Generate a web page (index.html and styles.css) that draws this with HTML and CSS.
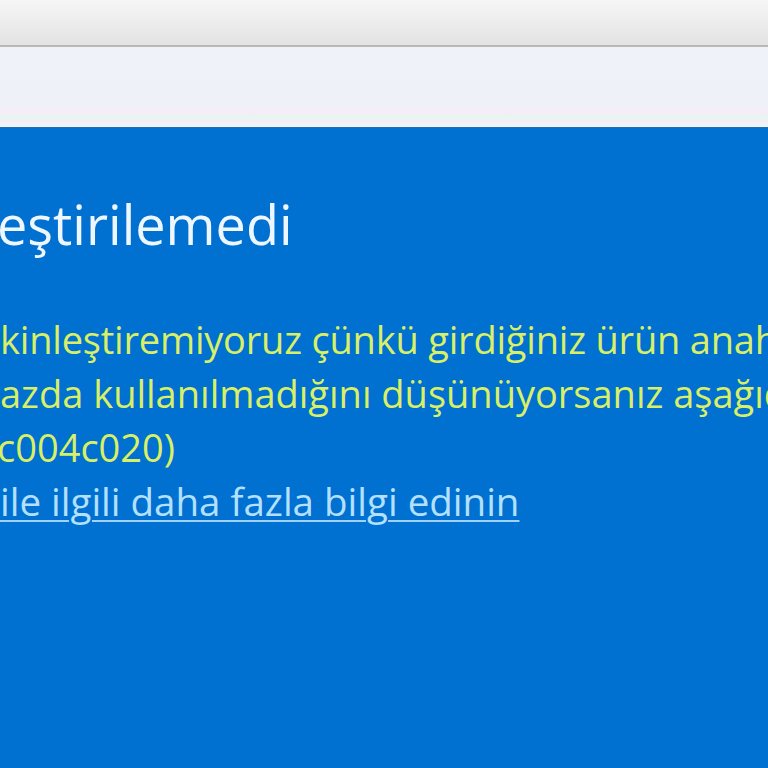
FILE: index.html
```html
<!DOCTYPE html>
<html lang="tr">

<head>
    <meta charset="UTF-8">
    <meta name="viewport" content="width=device-width, initial-scale=1.0">
    <title>Etkinleştirme</title>
    <link rel="stylesheet" href="styles.css">
</head>

<body>
    <div class="chrome"></div>
    <div class="banner"></div>

    <main class="panel">
        <h1 class="title"><span class="cut">Windows etkinl</span>eştirilemedi</h1>

        <p class="message">
            <span class="line line-first"><span class="cut">Bu cihazda Windows'u et</span>kinleştiremiyoruz çünkü girdiğiniz ürün anahtarı başka bir cihazda kullanılmış.</span>
            <span class="line"><span class="cut">Anahtarın başka bir cih</span>azda kullanılmadığını düşünüyorsanız aşağıdaki Sorun Gidericiyi seçin.</span>
            <span class="line line-code"><span class="cut">(0x</span>c004c020)</span>
        </p>

        <a class="more" href="#"><span class="cut">Etkinleştirme </span>ile ilgili daha fazla bilgi edinin</a>
    </main>
</body>

</html>
```

FILE: styles.css
```css
body {
    margin: 0;
    font-family: "Open Sans", "Noto Sans", sans-serif;
    background-color: #0070d1;
    overflow: hidden;
}

.chrome {
    height: 45px;
    background: linear-gradient(#f6f6f6, #e3e3e3);
    border-bottom: 2px solid #b8b8b8;
}

.banner {
    height: 80px;
    background: linear-gradient(#f0f2fa 0%, #eef1f8 70%, #f6ecf8 82%, #e6f6ee 88%, #f6ecf8 94%, #e4faff 100%);
    border-bottom: 1px solid #2f6a9c;
}

.panel {
    height: 640px;
    padding-top: 64px;
    box-sizing: border-box;
    background-color: #0070d1;
    overflow: hidden;
    white-space: nowrap;
}

/* hidden start of a clipped line: overflows to the left of the panel */
.cut {
    display: inline-flex;
    width: 0;
    justify-content: flex-end;
}

.title {
    margin: 0 0 0 -3px;
    font-size: 54px;
    font-weight: 400;
    line-height: 64px;
    color: #eef7ff;
}

.message {
    margin: 56px 0 0;
    font-size: 38px;
    line-height: 54px;
    color: #d8ef66;
}

.line {
    display: block;
}

.line-first {
    margin-left: 0;
    letter-spacing: -0.2px;
}

.line-code {
    margin-left: -3px;
}

.more {
    display: block;
    font-size: 38.5px;
    line-height: 54px;
    color: #b4e0ff;
    text-decoration: underline;
    text-decoration-thickness: 2px;
    text-underline-offset: 4px;
    text-decoration-color: #9fd2f6;
}
```
